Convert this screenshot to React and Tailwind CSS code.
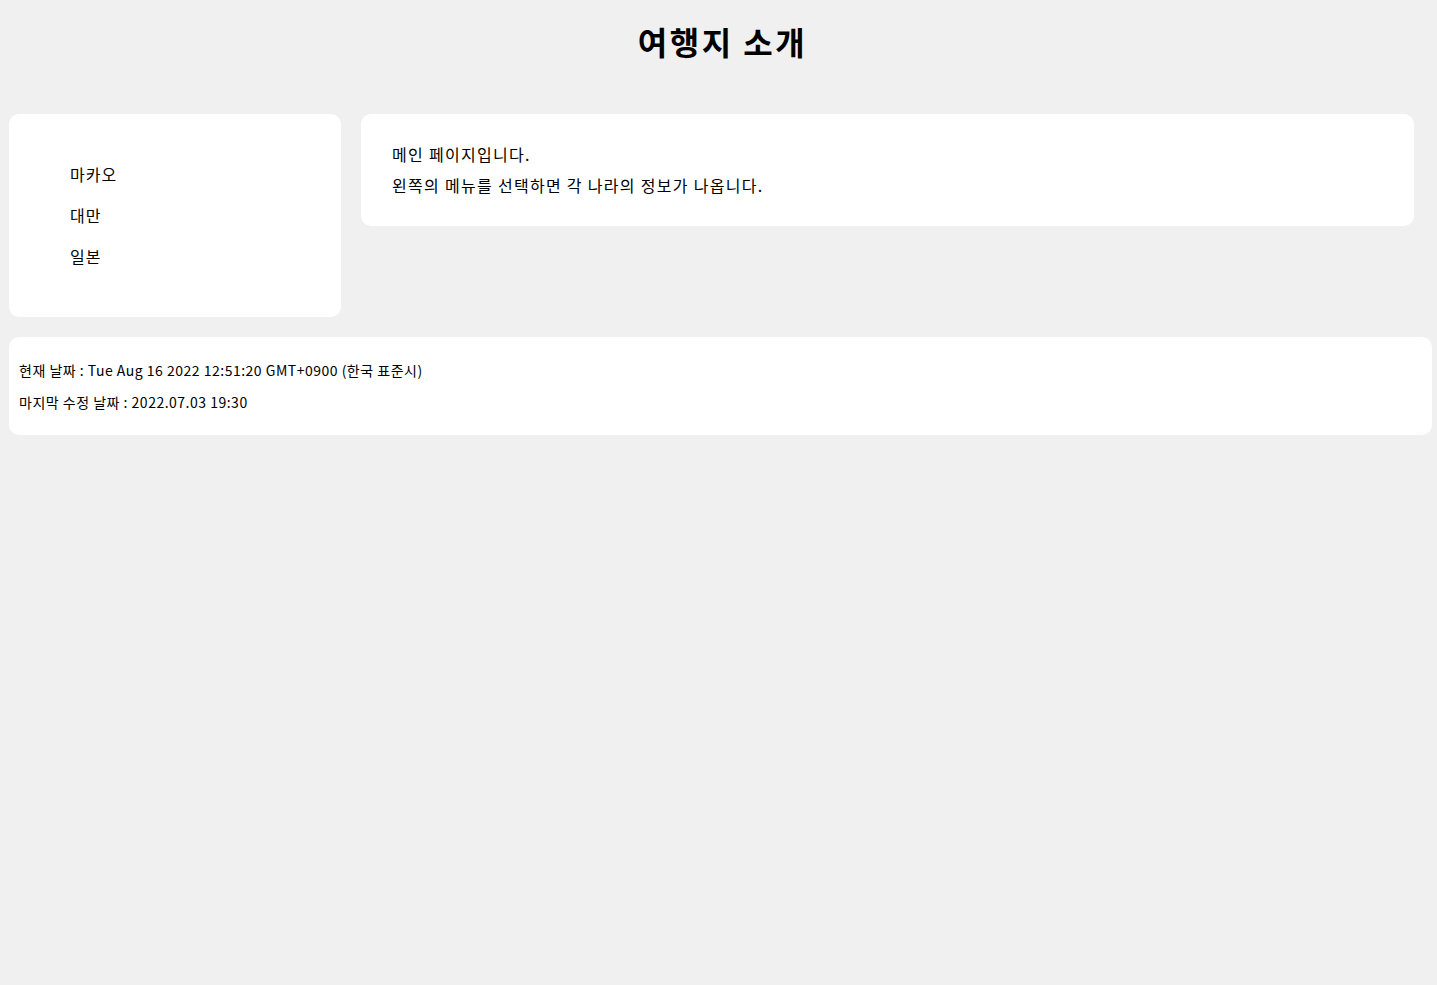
import React from 'react'

const menu = ['마카오', '대만', '일본']

export default function App() {
  return (
    <div
      className="min-h-screen bg-[#f0f0f0] text-black"
      style={{ fontFamily: '"Noto Sans CJK KR", "Noto Sans", sans-serif' }}
    >
      {/* header */}
      <h1 className="pl-[8px] pt-[21px] text-center text-[32px] font-bold leading-[40px] tracking-[2.5px]">여행지 소개</h1>

      <div className="mt-[53px] flex gap-5 pl-[9px]">
        {/* left menu */}
        <div className="w-[332px] rounded-[10px] bg-white pb-[41px] pt-[39px]">
          <ul className="pl-[61px] text-[16px] tracking-[1px]">
            {menu.map((m) => (
              <li key={m} className="flex h-[41px] items-center">
                {m}
              </li>
            ))}
          </ul>
        </div>

        {/* main content */}
        <div className="h-[112px] w-[1053px] rounded-[10px] bg-white px-[31px] py-[25px] text-[16px] leading-[31px] tracking-[1.3px]">
          <p>메인 페이지입니다.</p>
          <p>왼쪽의 메뉴를 선택하면 각 나라의 정보가 나옵니다.</p>
        </div>
      </div>

      {/* footer */}
      <div className="ml-[9px] mt-5 w-[1423px] rounded-[10px] bg-white px-[10px] py-[17px] text-[14px] leading-[32px] tracking-[0.5px]">
        <p>현재 날짜 : Tue Aug 16 2022 12:51:20 GMT+0900 (한국 표준시)</p>
        <p>마지막 수정 날짜 : 2022.07.03 19:30</p>
      </div>
    </div>
  )
}
